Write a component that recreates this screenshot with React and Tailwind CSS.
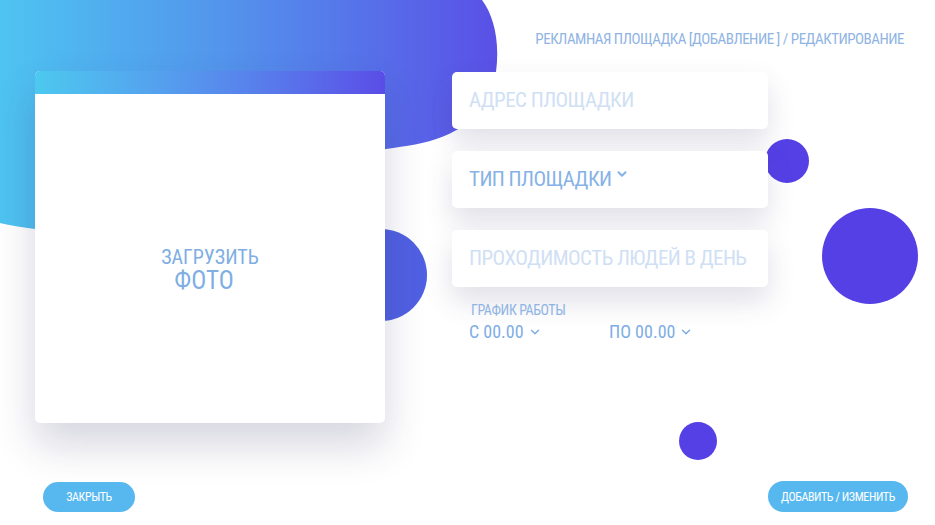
import React from "react";
import { ChevronDown } from "lucide-react";

const font = { fontFamily: "Roboto, 'Noto Sans', sans-serif" };

function Decor() {
  return (
    <svg className="absolute inset-0 w-full h-full" viewBox="0 0 935 525" aria-hidden="true">
      <defs>
        <linearGradient id="blob" x1="0" y1="0" x2="500" y2="0" gradientUnits="userSpaceOnUse">
          <stop offset="0" stopColor="#4ec4f1" />
          <stop offset="0.45" stopColor="#5394ec" />
          <stop offset="1" stopColor="#5a4fe6" />
        </linearGradient>
      </defs>
      <path
        d="M0,0 L482,0 C494,16 500,42 496,72 C490,112 462,134 422,143 C386,151 340,152 300,162 C220,182 130,242 35,229 C20,227 8,225 0,223 Z"
        fill="url(#blob)"
      />
      <circle cx="381" cy="275" r="46" fill="#5060e2" />
      <circle cx="787" cy="161" r="22" fill="#5540e6" />
      <circle cx="870" cy="256" r="48" fill="#5540e6" />
      <circle cx="698" cy="441" r="19" fill="#5540e6" />
    </svg>
  );
}

function Field({ children, dim }) {
  return (
    <div className="h-[57px] w-[316px] rounded-[5px] bg-white shadow-[0_14px_28px_rgba(60,60,110,0.16)] flex items-center px-[17px]">
      <span className={`font-stretch-condensed whitespace-nowrap text-[21px] tracking-[-0.55px] leading-none flex items-start ${dim ? "text-[#d0e0f4]" : "text-[#86b2e6]"}`}>
        {children}
      </span>
    </div>
  );
}

export default function App() {
  return (
    <div className="relative w-[935px] h-[525px] overflow-hidden bg-white" style={font}>
      <Decor />
      <div className="relative flex flex-col h-full">
        <div className="flex justify-end pt-[31px] pr-[31px]">
          <span className="font-stretch-condensed text-[15px] tracking-[-0.5px] leading-[16px] text-[#90b4e4] whitespace-nowrap">
            РЕКЛАМНАЯ ПЛОЩАДКА [ДОБАВЛЕНИЕ ] / РЕДАКТИРОВАНИЕ
          </span>
        </div>

        <div className="flex pl-[35px] mt-[24px]">
          <div className="w-[350px] h-[352px] rounded-[5px] bg-white overflow-hidden shadow-[0_22px_40px_rgba(50,50,100,0.2)] flex flex-col">
            <div className="h-[23px] bg-gradient-to-r from-[#4cc9ef] to-[#5a4ce7]" />
            <div className="flex-1 flex flex-col items-center justify-center pt-[22px] text-[#7eaee4] font-stretch-condensed">
              <span className="text-[20px] leading-[22px]">ЗАГРУЗИТЬ</span>
              <span className="text-[25px] leading-[26px] pr-[12px]">ФОТО</span>
            </div>
          </div>

          <div className="ml-[67px] pt-[1px] flex flex-col gap-[22px]">
            <Field dim>АДРЕС ПЛОЩАДКИ</Field>
            <Field>
              ТИП ПЛОЩАДКИ
              <ChevronDown size={14} strokeWidth={3.5} className="ml-[3px] -mt-[2px]" />
            </Field>
            <Field dim>ПРОХОДИМОСТЬ ЛЮДЕЙ В ДЕНЬ</Field>
            <div className="-mt-[7px] pl-[19px] text-[#7eaee4] font-stretch-condensed">
              <div className="text-[14px] tracking-[-0.4px] leading-[16px] text-[#8fb4e4]">ГРАФИК РАБОТЫ</div>
              <div className="flex mt-[4px] -ml-[2px] text-[18px] leading-[20px]">
                <span className="flex items-center w-[140px]">
                  С 00.00
                  <ChevronDown size={14} strokeWidth={2.5} className="ml-[4px]" />
                </span>
                <span className="flex items-center">
                  ПО 00.00
                  <ChevronDown size={14} strokeWidth={2.5} className="ml-[4px]" />
                </span>
              </div>
            </div>
          </div>
        </div>

        <div className="mt-auto flex justify-between items-center pr-[27px] pb-[13px] pl-[43px]">
          <button className="h-[30px] w-[92px] rounded-full bg-[#57b8ef] text-white text-[12px] tracking-[-0.4px] font-stretch-condensed">
            ЗАКРЫТЬ
          </button>
          <button className="h-[31px] w-[140px] rounded-full bg-[#57b8ef] text-white text-[12px] tracking-[-0.4px] font-stretch-condensed">
            ДОБАВИТЬ / ИЗМЕНИТЬ
          </button>
        </div>
      </div>
    </div>
  );
}
